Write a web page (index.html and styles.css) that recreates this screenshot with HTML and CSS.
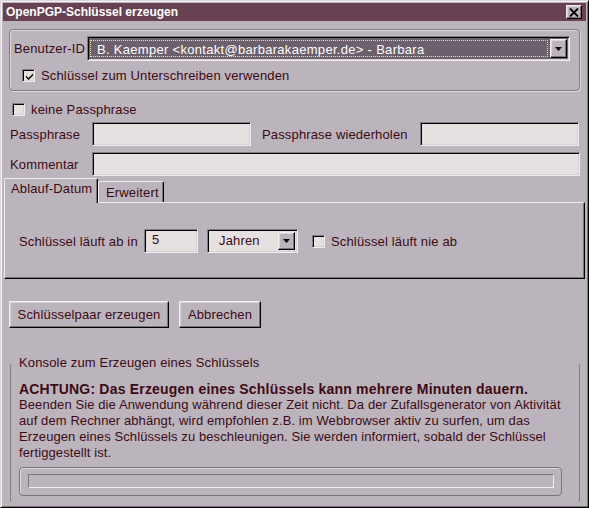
FILE: index.html
```html
<!DOCTYPE html>
<html>
<head>
<meta charset="utf-8">
<link rel="stylesheet" href="styles.css">
</head>
<body>
<div class="window">
  <div class="titlebar">
    <span class="title">OpenPGP-Schlüssel erzeugen</span>
    <span class="close btn"><svg width="10" height="9" viewBox="0 0 10 9"><path d="M1 0.5 L9 8.5 M9 0.5 L1 8.5" stroke="#000" stroke-width="1.8" fill="none"/></svg></span>
  </div>

  <div class="group user">
    <div class="row">
      <span class="lbl uid-lbl">Benutzer-ID</span>
      <div class="combo field">
        <span class="combo-text">B. Kaemper &lt;kontakt@barbarakaemper.de&gt; - Barbara</span>
        <span class="drop btn"><svg width="7" height="4" viewBox="0 0 7 4"><path d="M0 0 H7 L3.5 4 Z" fill="#000"/></svg></span>
      </div>
    </div>
    <div class="row check-row sign">
      <span class="check field"><svg width="9" height="9" viewBox="0 0 9 9"><path d="M1 3.5 L3.5 6 L8 1.5 L8 3.5 L3.5 8 L1 5.5 Z" fill="#000"/></svg></span>
      <span class="lbl">Schlüssel zum Unterschreiben verwenden</span>
    </div>
  </div>

  <div class="row check-row nopass">
    <span class="check field"></span>
    <span class="lbl">keine Passphrase</span>
  </div>

  <div class="row pass">
    <span class="lbl pass-lbl">Passphrase</span>
    <span class="input field w-pass"></span>
    <span class="lbl pass2-lbl">Passphrase wiederholen</span>
    <span class="input field w-pass"></span>
  </div>

  <div class="row comment">
    <span class="lbl pass-lbl">Kommentar</span>
    <span class="input field w-comment"></span>
  </div>

  <div class="tabs">
    <span class="tab active">Ablauf-Datum</span>
    <span class="tab">Erweitert</span>
  </div>
  <div class="panel">
    <div class="row check-row expiry">
      <span class="lbl exp-lbl">Schlüssel läuft ab in</span>
      <span class="input field w-num">5</span>
      <div class="select field">
        <span class="select-text">Jahren</span>
        <span class="drop btn"><svg width="7" height="4" viewBox="0 0 7 4"><path d="M0 0 H7 L3.5 4 Z" fill="#000"/></svg></span>
      </div>
      <span class="check field never"></span>
      <span class="lbl">Schlüssel läuft nie ab</span>
    </div>
  </div>

  <div class="buttons">
    <span class="btn pushbtn w-gen">Schlüsselpaar erzeugen</span>
    <span class="btn pushbtn w-cancel">Abbrechen</span>
  </div>

  <fieldset class="console">
    <legend>Konsole zum Erzeugen eines Schlüssels</legend>
    <p class="warn">ACHTUNG: Das Erzeugen eines Schlüssels kann mehrere Minuten dauern.</p>
    <p class="info">Beenden Sie die Anwendung während dieser Zeit nicht. Da der Zufallsgenerator von Aktivität<br>auf dem Rechner abhängt, wird empfohlen z.B. im Webbrowser aktiv zu surfen, um das<br>Erzeugen eines Schlüssels zu beschleunigen. Sie werden informiert, sobald der Schlüssel<br>fertiggestellt ist.</p>
    <div class="progress-outer">
      <div class="progress-inner"></div>
    </div>
  </fieldset>
</div>
</body>
</html>
```

FILE: styles.css
```css
* { box-sizing: border-box; }

html, body {
  margin: 0;
  padding: 0;
  background: #bcb4bc;
}

body {
  font-family: "Liberation Sans", Arial, sans-serif;
  font-size: 13px;
  letter-spacing: 0.15px;
  color: #3c0a14;
}

.window {
  width: 589px;
  height: 508px;
  background: #bcb4bc;
  border: 1px solid;
  border-color: #dcd8dc #000 #000 #dcd8dc;
  box-shadow: inset 1px 1px 0 #f4f0f4, inset -1px -1px 0 #7c747c;
  padding: 2px;
  overflow: hidden;
}

/* title bar */
.titlebar {
  height: 18px;
  background: #684252;
  display: flex;
  justify-content: space-between;
  align-items: flex-start;
}
.title {
  color: #fff;
  font-weight: bold;
  font-size: 12px;
  letter-spacing: 0;
  line-height: 18px;
  padding-left: 3px;
}
.close {
  width: 16px;
  height: 14px;
  margin: 2px 4px 0 0;
  display: flex;
  align-items: center;
  justify-content: center;
}

/* shared 3d styles */
.field {
  border: 1px solid;
  border-color: #847c84 #f0ecf0 #f0ecf0 #847c84;
  box-shadow: inset 1px 1px 0 #000, inset -1px -1px 0 #d4d0d4;
  background: #e6e0e0;
}
.btn {
  background: #bcb4bc;
  border: 1px solid;
  border-color: #f0ecf0 #000 #000 #f0ecf0;
  box-shadow: inset -1px -1px 0 #7c747c, inset 1px 1px 0 #d8d4d8;
}

.row {
  display: flex;
  align-items: center;
}
.lbl { white-space: nowrap; line-height: 13px; }

/* user group */
.group {
  border: 1px solid #847c84;
  border-radius: 4px;
  box-shadow: 1px 1px 0 #dcd8dc, inset 1px 1px 0 #dcd8dc;
}
.user {
  margin: 8px 6px 0 6px;
  height: 62px;
  padding: 6px 9px 0 4px;
}
.uid-lbl { width: 73px; }
.combo {
  flex: 1;
  height: 25px;
  display: flex;
  padding: 2px;
  background: #6c606c;
}
.combo-text {
  flex: 1;
  color: #fff;
  line-height: 19px;
  padding-left: 7px;
  letter-spacing: 0.3px;
  outline: 1px dotted #f0e090;
  outline-offset: -1px;
  margin: 1px 2px 1px 0;
  white-space: nowrap;
  overflow: hidden;
}
.drop {
  width: 17px;
  display: flex;
  align-items: center;
  justify-content: center;
}
.check {
  width: 13px;
  height: 13px;
  display: flex;
  align-items: center;
  justify-content: center;
  flex: none;
  padding-top: 1px;
  padding-left: 1px;
}
.sign { margin-top: 8px; padding-left: 8px; }
.check-row .check { margin-right: 6px; }

.nopass { margin: 12px 0 0 9px; }

/* passphrase rows */
.pass { margin: 6px 0 0 7px; }
.pass-lbl { width: 82px; }
.input {
  height: 24px;
  line-height: 20px;
  padding-left: 7px;
}
.w-pass { width: 159px; }
.pass2-lbl { width: 158px; margin-left: 11px; }
.comment { margin: 6px 0 0 7px; }
.w-comment { width: 488px; }

/* tabs */
.tabs {
  display: flex;
  align-items: flex-end;
  margin: 2px 0 0 1px;
  height: 24px;
  position: relative;
  z-index: 1;
}
.tab {
  height: 21px;
  padding: 0 4px 0 7px;
  line-height: 21px;
  white-space: nowrap;
  border-top: 1px solid #f0ecf0;
  border-left: 1px solid #f0ecf0;
  border-right: 1px solid #000;
  border-radius: 2px 2px 0 0;
  box-shadow: inset -1px 0 0 #7c747c;
  background: #bcb4bc;
}
.tab.active {
  height: 25px;
  margin-bottom: -1px;
  line-height: 20px;
  width: 94px;
  padding-left: 6px;
}
.panel {
  margin: 0 1px 0 1px;
  height: 77px;
  border: 1px solid;
  border-color: #f0ecf0 #000 #000 #f0ecf0;
  box-shadow: inset -1px -1px 0 #7c747c;
  padding: 26px 0 0 14px;
}
.exp-lbl { width: 125px; }
.w-num { width: 54px; padding-left: 7px; }
.select {
  width: 91px;
  height: 24px;
  margin-left: 9px;
  display: flex;
  padding: 2px;
}
.select-text {
  flex: 1;
  line-height: 18px;
  padding-left: 9px;
}
.check.never { margin-left: 14px; }

/* buttons */
.buttons {
  display: flex;
  gap: 10px;
  margin: 22px 0 0 6px;
}
.pushbtn {
  height: 27px;
  line-height: 25px;
  text-align: center;
}
.w-gen { width: 160px; }
.w-cancel { width: 82px; }

/* console */
.console {
  margin: 27px 6px 0 7px;
  width: 570px;
  padding: 10px 8px 6px 8px;
  border: 1px solid #847c84;
  border-top-color: transparent;
  border-bottom-color: transparent;
  border-radius: 4px;
  min-inline-size: 0;
}
.console legend {
  padding: 0;
  line-height: 16px;
}
.console p {
  margin: 0;
  line-height: 16px;
  white-space: nowrap;
}
.warn {
  font-weight: bold;
  font-size: 14px;
  letter-spacing: 0.2px;
}
.info { letter-spacing: 0.1px; }
.progress-outer {
  margin: 6px 9px 0 0;
  height: 29px;
  border: 1px solid #7c747c;
  border-radius: 4px;
  box-shadow: inset 1px 1px 0 #dcd8dc;
  padding: 6px 7px 0 8px;
}
.progress-inner {
  height: 14px;
  border: 1px solid;
  border-color: #7c747c #f0ecf0 #f0ecf0 #7c747c;
}
```
